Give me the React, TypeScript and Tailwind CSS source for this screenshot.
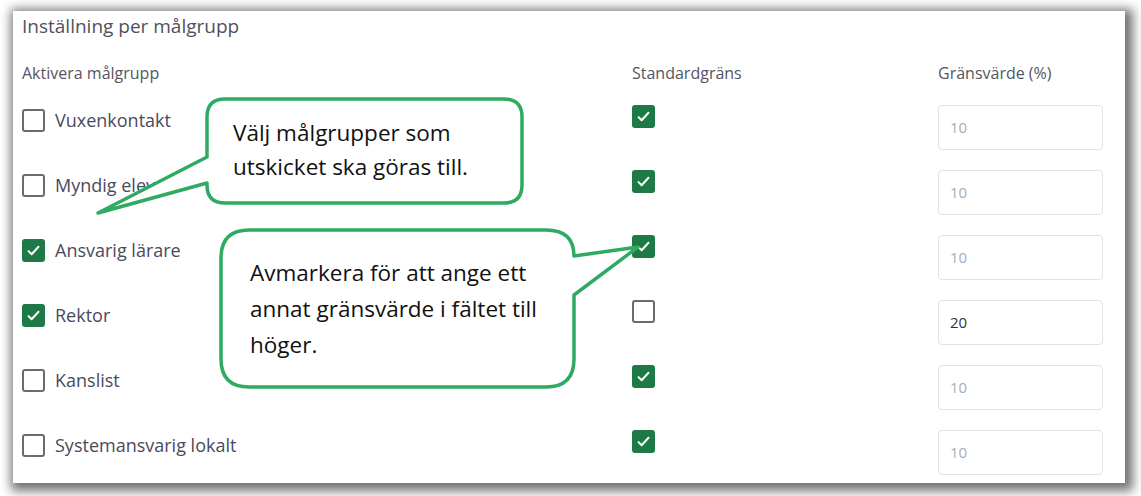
import React from 'react';

type Row = { label: string; active: boolean; standard: boolean; value: string };

const rows: Row[] = [
  { label: 'Vuxenkontakt', active: false, standard: true, value: '10' },
  { label: 'Myndig elev', active: false, standard: true, value: '10' },
  { label: 'Ansvarig lärare', active: true, standard: true, value: '10' },
  { label: 'Rektor', active: true, standard: false, value: '20' },
  { label: 'Kanslist', active: false, standard: true, value: '10' },
  { label: 'Systemansvarig lokalt', active: false, standard: true, value: '10' },
];

const Box = ({ checked }: { checked: boolean }) =>
  checked ? (
    <span className="flex h-[23px] w-[23px] items-center justify-center rounded-[3px] bg-[#1d7a46]">
      <svg width="15" height="15" viewBox="0 0 24 24" fill="none" stroke="white" strokeWidth="3.2" strokeLinecap="round" strokeLinejoin="round">
        <path d="M4 13l5 5L20 6" />
      </svg>
    </span>
  ) : (
    <span className="block h-[23px] w-[23px] rounded-[3px] border-2 border-[#6b6b6b] bg-white" />
  );

const App: React.FC = () => {
  return (
    <div className="h-[496px] w-[1141px] overflow-hidden bg-white pl-[13px] pt-[11px] font-['Open_Sans',sans-serif]">
      <div className="relative h-[472px] w-[1112px] bg-white pl-[9px] shadow-[3px_3px_10px_5px_rgba(0,0,0,0.55)]">
        <div className="pt-[3px] text-[19px] leading-[24px] text-[#505060]">Inställning per målgrupp</div>
        <div className="mt-[25px] grid grid-cols-[610px_306px_165px] text-[16px] leading-[20px] text-[#555563]">
          <div>Aktivera målgrupp</div>
          <div>Standardgräns</div>
          <div>Gränsvärde (%)</div>
        </div>
        <div className="mt-[22px] flex flex-col">
          {rows.map((r) => (
            <div key={r.label} className="grid h-[65px] grid-cols-[610px_306px_165px] items-start">
              <div className="flex items-center gap-[10px] pt-[3px]">
                <Box checked={r.active} />
                <span className="text-[18px] leading-[24px] text-[#4a4a5c]">{r.label}</span>
              </div>
              <div>
                <Box checked={r.standard} />
              </div>
              <div className="flex h-[45px] items-center rounded-[4px] border border-[#e2e2e2] pl-[11px]">
                <span className={r.standard ? 'text-[15px] text-[#a8adb8]' : 'text-[15px] text-[#333340]'}>{r.value}</span>
              </div>
            </div>
          ))}
        </div>
      </div>

      {/* callouts */}
      <svg className="absolute left-0 top-0" width="1141" height="496" viewBox="0 0 1141 496">
        <path
          d="M225 99 H504 Q522 99 522 117 V185 Q522 203 504 203 H225 Q207 203 207 185 V183 L98 213 L207 157 V117 Q207 99 225 99 Z"
          fill="white"
          stroke="#2eaa63"
          strokeWidth="3.5"
          strokeLinejoin="round"
        />
        <path
          d="M249 230 H546 Q574 230 574 256 L638 247 L574 295 V359 Q574 387 546 387 H249 Q221 387 221 359 V258 Q221 230 249 230 Z"
          fill="white"
          stroke="#2eaa63"
          strokeWidth="3.5"
          strokeLinejoin="round"
        />
      </svg>
      <div className="absolute left-[233px] top-[116px] text-[22.5px] leading-[34px] text-[#111]">
        Välj målgrupper som
        <br />
        utskicket ska göras till.
      </div>
      <div className="absolute left-[250px] top-[255px] text-[22.5px] leading-[36px] text-[#111]">
        Avmarkera för att ange ett
        <br />
        annat gränsvärde i fältet till
        <br />
        höger.
      </div>
    </div>
  );
};

export default App;
